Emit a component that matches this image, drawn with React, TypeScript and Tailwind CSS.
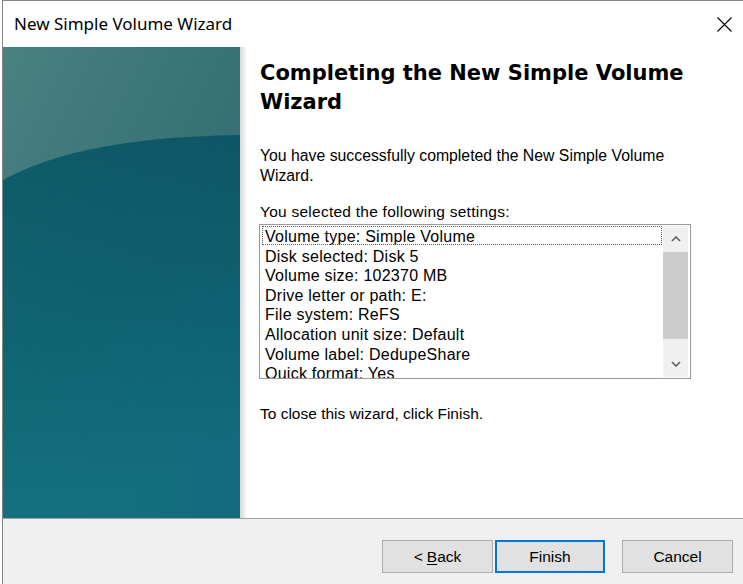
import React from "react";

const items = [
  "Volume type: Simple Volume",
  "Disk selected: Disk 5",
  "Volume size: 102370 MB",
  "Drive letter or path: E:",
  "File system: ReFS",
  "Allocation unit size: Default",
  "Volume label: DedupeShare",
  "Quick format: Yes",
  "File and folder compression: Disabled",
];

function Panel() {
  return (
    <svg width="237" height="471" viewBox="0 0 237 471" className="block">
      <defs>
        <linearGradient id="up" x1="0" y1="0" x2="1" y2="1">
          <stop offset="0" stopColor="#4a8181" />
          <stop offset="0.5" stopColor="#387275" />
          <stop offset="1" stopColor="#2a656c" />
        </linearGradient>
        <linearGradient id="low" x1="0" y1="0" x2="0.25" y2="1">
          <stop offset="0" stopColor="#0b5260" />
          <stop offset="0.5" stopColor="#0e5f6c" />
          <stop offset="1" stopColor="#13717f" />
        </linearGradient>
        <linearGradient id="lowR" x1="0" y1="0" x2="1" y2="0">
          <stop offset="0" stopColor="#1a7a86" stopOpacity="0.2" />
          <stop offset="1" stopColor="#0d4f70" stopOpacity="0.18" />
        </linearGradient>
      </defs>
      <rect x="0" y="0" width="237" height="471" fill="url(#up)" />
      <path d="M0 133 C 50 106, 120 90, 237 88 L 237 471 L 0 471 Z" fill="url(#low)" />
      <path d="M0 133 C 50 106, 120 90, 237 88 L 237 471 L 0 471 Z" fill="url(#lowR)" />
    </svg>
  );
}

function Chevron({ down }: { down?: boolean }) {
  return (
    <svg width="10" height="6" viewBox="0 0 10 6">
      <polyline
        points={down ? "1,1 5,5 9,1" : "1,5 5,1 9,5"}
        fill="none"
        stroke="#606060"
        strokeWidth="1.6"
      />
    </svg>
  );
}

export default function App() {
  return (
    <div className="flex w-[743px] h-[584px] overflow-hidden bg-white font-['Liberation_Sans',Arial,sans-serif] text-black">
      <div className="w-[2px] bg-white" />
      <div className="flex flex-1 flex-col border-l border-t border-[#858585]">
        {/* Title bar */}
        <div className="flex h-[46px] items-center justify-between pl-[11px] pr-[11px]">
          <span className="font-['Noto_Sans',sans-serif] text-[17px] text-[#000]">
            New Simple Volume Wizard
          </span>
          <svg width="15" height="15" viewBox="0 0 15 15">
            <path d="M0.5 0.5 L14.5 14.5 M14.5 0.5 L0.5 14.5" stroke="#000" strokeWidth="1.1" />
          </svg>
        </div>

        {/* Content */}
        <div className="flex h-[471px]">
          <div className="w-[237px]">
            <Panel />
          </div>
          <div className="w-[7px] bg-linear-to-r from-[#d6d6d6] to-white" />
          <div className="flex flex-1 flex-col pl-[13px]">
            <h1 className="mt-[12px] font-['DejaVu_Sans',Verdana,sans-serif] text-[21px] font-bold leading-[29px]">
              Completing the New Simple Volume
              <br />
              Wizard
            </h1>
            <p className="mt-[29px] text-[15.8px] leading-[19.5px]">
              You have successfully completed the New Simple Volume
              <br />
              Wizard.
            </p>
            <p className="mt-[17px] text-[15.5px] leading-[19.5px] tracking-[0.25px]">
              You selected the following settings:
            </p>
            <div className="ml-[-1px] mt-[2px] flex h-[155px] w-[432px] border border-[#9a9a9a] bg-white">
              <div className="flex-1 overflow-hidden pl-[2px] pr-[1px] pt-[2.5px]">
                {items.map((t, i) => (
                  <div
                    key={t}
                    className="relative whitespace-nowrap pl-[3px] text-[16px] leading-[19.6px] tracking-[0.25px]"
                  >
                    {i === 0 && (
                      <div className="absolute left-0 right-0 top-[-1px] h-[19px] border border-dotted border-[#5a5a5a]" />
                    )}
                    {t}
                  </div>
                ))}
              </div>
              <div className="my-[1px] mr-[2px] flex w-[25px] flex-col bg-[#f0f0f0]">
                <div className="flex h-[26px] items-center justify-center pt-[1px]">
                  <Chevron />
                </div>
                <div className="h-[87px] bg-[#cdcdcd]" />
                <div className="h-[13px]" />
                <div className="flex h-[25px] items-center justify-center">
                  <Chevron down />
                </div>
              </div>
            </div>
            <p className="mt-[25px] text-[15.5px] leading-[19.5px]">
              To close this wizard, click Finish.
            </p>
          </div>
        </div>

        {/* Bottom */}
        <div className="h-px bg-[#a0a0a0]" />
        <div className="flex h-[65px] items-start justify-end bg-[#f0f0f0] pr-[10px] pt-[21px]">
          <button className="flex h-[33px] w-[111px] items-center justify-center border border-[#adadad] bg-[#e1e1e1] text-[15.5px] leading-[19.5px]">
            &lt; <span className="ml-[4px] underline underline-offset-2">B</span>ack
          </button>
          <button className="ml-[2px] flex h-[33px] w-[110px] items-center justify-center border-2 border-[#0078d7] bg-[#e1e1e1] text-[15.5px] leading-[19.5px]">
            Finish
          </button>
          <button className="ml-[17px] flex h-[33px] w-[111px] items-center justify-center border border-[#adadad] bg-[#e1e1e1] text-[15.5px] leading-[19.5px]">
            Cancel
          </button>
        </div>
      </div>
    </div>
  );
}
